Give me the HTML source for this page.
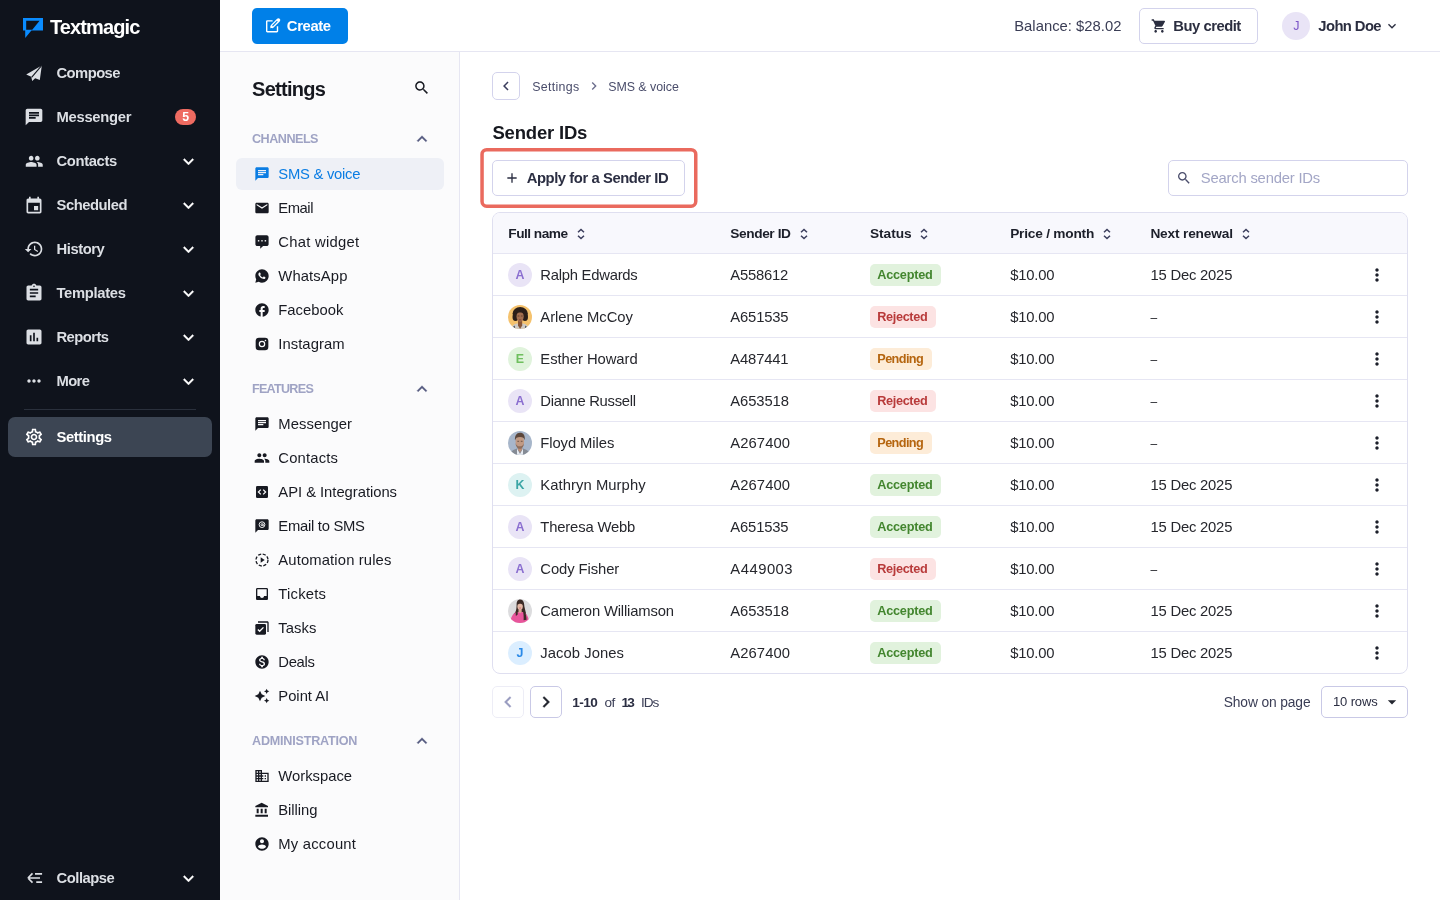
<!DOCTYPE html>
<html lang="en"><head><meta charset="utf-8"><title>Sender IDs - Textmagic</title><style>
html,body{margin:0;padding:0}
body{width:1440px;height:900px;overflow:hidden;position:relative;background:#fff;font-family:"Liberation Sans", sans-serif;-webkit-font-smoothing:antialiased;will-change:transform}
.a{position:absolute;box-sizing:border-box}
.t{position:absolute;white-space:pre;line-height:20px;height:20px}
</style></head><body>
<div class="a" style="left:0px;top:0px;width:220px;height:900px;background:#0f131c"></div>
<div class="a" style="left:220px;top:0px;width:1220px;height:51px;background:#fff"></div>
<div class="a" style="left:220px;top:51px;width:1220px;height:1px;background:#e6e6f2"></div>
<div class="a" style="left:220px;top:52px;width:239px;height:848px;background:#fbfbfc"></div>
<div class="a" style="left:459px;top:52px;width:1px;height:848px;background:#e6e6f2"></div>
<svg class="a" style="left:20px;top:14px" width="28" height="28" viewBox="20 14 28 28"><path fill="#0a8cff" d="M23 18H43V30.6H31.4L25.2 38V30.6H23Z"/><path fill="#0f131c" d="M26.2 20.7H39.6L32.3 29.7H26.2Z"/></svg>
<svg class="a" style="left:24.00px;top:63.00px" width="20" height="20" viewBox="2 0 20 20" ><path fill="#dcdfe4" d="M19.8 2.4 L4.2 11.6 L9.2 13.8 L10.2 18 L13.2 15.3 L17.8 17 Z"/><path d="M19.8 2.4 L9.6 14.4" stroke="#0f131c" stroke-width="1.1" fill="none"/></svg>
<svg class="a" style="left:24.00px;top:107.00px" width="20" height="20" viewBox="0 0 24 24" fill="#dcdfe4" ><path d="M20 2H4c-1.1 0-1.99.9-1.99 2L2 22l4-4h14c1.1 0 2-.9 2-2V4c0-1.1-.9-2-2-2zM6 9h12v2H6V9zm8 5H6v-2h8v2zm4-6H6V6h12v2z"/></svg>
<div class="a" style="left:175px;top:109px;width:21px;height:16px;background:#ee6b61;border-radius:8px"></div>
<svg class="a" style="left:24.75px;top:151.75px" width="18.5" height="18.5" viewBox="0 0 24 24" fill="#dcdfe4" ><path d="M16 11c1.66 0 2.99-1.34 2.99-3S17.66 5 16 5c-1.66 0-3 1.34-3 3s1.34 3 3 3zm-8 0c1.66 0 2.99-1.34 2.99-3S9.66 5 8 5C6.34 5 5 6.34 5 8s1.34 3 3 3zm0 2c-2.33 0-7 1.17-7 3.5V19h14v-2.5c0-2.33-4.67-3.5-7-3.5zm8 0c-.29 0-.62.02-.97.05 1.16.84 1.97 1.97 1.97 3.45V19h6v-2.5c0-2.33-4.67-3.5-7-3.5z"/></svg>
<svg class="a" style="left:177.50px;top:150.80px" width="21" height="21" viewBox="0 0 24 24" fill="#ffffff" stroke="#ffffff" stroke-width="0.35"><path d="M16.59 8.59L12 13.17 7.41 8.59 6 10l6 6 6-6z"/></svg>
<svg class="a" style="left:24.00px;top:196.00px" width="20" height="20" viewBox="0 0 24 24" fill="#dcdfe4" ><path d="M17 12h-5v5h5v-5zM16 1v2H8V1H6v2H5c-1.11 0-1.99.9-1.99 2L3 19c0 1.1.89 2 2 2h14c1.1 0 2-.9 2-2V5c0-1.1-.9-2-2-2h-1V1h-2zm3 18H5V8h14v11z"/></svg>
<svg class="a" style="left:177.50px;top:194.80px" width="21" height="21" viewBox="0 0 24 24" fill="#ffffff" stroke="#ffffff" stroke-width="0.35"><path d="M16.59 8.59L12 13.17 7.41 8.59 6 10l6 6 6-6z"/></svg>
<svg class="a" style="left:24.00px;top:239.00px" width="20" height="20" viewBox="0 0 24 24" fill="#dcdfe4" ><path d="M13 3c-4.97 0-9 4.03-9 9H1l3.89 3.89.07.14L9 12H6c0-3.87 3.13-7 7-7s7 3.13 7 7-3.13 7-7 7c-1.93 0-3.68-.79-4.94-2.06l-1.42 1.42C8.27 19.99 10.51 21 13 21c4.97 0 9-4.03 9-9s-4.03-9-9-9zm-1 5v5l4.28 2.54.72-1.21-3.5-2.08V8H12z"/></svg>
<svg class="a" style="left:177.50px;top:238.80px" width="21" height="21" viewBox="0 0 24 24" fill="#ffffff" stroke="#ffffff" stroke-width="0.35"><path d="M16.59 8.59L12 13.17 7.41 8.59 6 10l6 6 6-6z"/></svg>
<svg class="a" style="left:24.00px;top:283.00px" width="20" height="20" viewBox="0 0 24 24" fill="#dcdfe4" ><path d="M19 3h-4.18C14.4 1.84 13.3 1 12 1c-1.3 0-2.4.84-2.82 2H5c-1.1 0-2 .9-2 2v14c0 1.1.9 2 2 2h14c1.1 0 2-.9 2-2V5c0-1.1-.9-2-2-2zm-7 0c.55 0 1 .45 1 1s-.45 1-1 1-1-.45-1-1 .45-1 1-1zm2 14H7v-2h7v2zm3-4H7v-2h10v2zm0-4H7V7h10v2z"/></svg>
<svg class="a" style="left:177.50px;top:282.80px" width="21" height="21" viewBox="0 0 24 24" fill="#ffffff" stroke="#ffffff" stroke-width="0.35"><path d="M16.59 8.59L12 13.17 7.41 8.59 6 10l6 6 6-6z"/></svg>
<svg class="a" style="left:24.00px;top:327.00px" width="20" height="20" viewBox="0 0 24 24" fill="#dcdfe4" ><path d="M19 3H5c-1.1 0-2 .9-2 2v14c0 1.1.9 2 2 2h14c1.1 0 2-.9 2-2V5c0-1.1-.9-2-2-2zM9 17H7v-7h2v7zm4 0h-2V7h2v10zm4 0h-2v-4h2v4z"/></svg>
<svg class="a" style="left:177.50px;top:326.80px" width="21" height="21" viewBox="0 0 24 24" fill="#ffffff" stroke="#ffffff" stroke-width="0.35"><path d="M16.59 8.59L12 13.17 7.41 8.59 6 10l6 6 6-6z"/></svg>
<svg class="a" style="left:24.00px;top:371.00px" width="20" height="20" viewBox="0 0 24 24" fill="#dcdfe4" ><path d="M6 10c-1.1 0-2 .9-2 2s.9 2 2 2 2-.9 2-2-.9-2-2-2zm12 0c-1.1 0-2 .9-2 2s.9 2 2 2 2-.9 2-2-.9-2-2-2zm-6 0c-1.1 0-2 .9-2 2s.9 2 2 2 2-.9 2-2-.9-2-2-2z"/></svg>
<svg class="a" style="left:177.50px;top:370.80px" width="21" height="21" viewBox="0 0 24 24" fill="#ffffff" stroke="#ffffff" stroke-width="0.35"><path d="M16.59 8.59L12 13.17 7.41 8.59 6 10l6 6 6-6z"/></svg>
<div class="a" style="left:24px;top:409px;width:172px;height:1px;background:#2a303c"></div>
<div class="a" style="left:8px;top:417px;width:204px;height:40px;background:#3c4553;border-radius:7px"></div>
<svg class="a" style="left:24.00px;top:427.00px" width="20" height="20" viewBox="0 0 24 24" fill="#ffffff" ><path d="M19.43 12.98c.04-.32.07-.64.07-.98 0-.34-.03-.66-.07-.98l2.11-1.65c.19-.15.24-.42.12-.64l-2-3.46c-.09-.16-.26-.25-.44-.25-.06 0-.12.01-.17.03l-2.49 1c-.52-.4-1.08-.73-1.69-.98l-.38-2.65C14.46 2.18 14.25 2 14 2h-4c-.25 0-.46.18-.49.42l-.38 2.65c-.61.25-1.17.59-1.69.98l-2.49-1c-.06-.02-.12-.03-.18-.03-.17 0-.34.09-.43.25l-2 3.46c-.13.22-.07.49.12.64l2.11 1.65c-.04.32-.07.65-.07.98 0 .33.03.66.07.98l-2.11 1.65c-.19.15-.24.42-.12.64l2 3.46c.09.16.26.25.44.25.06 0 .12-.01.17-.03l2.49-1c.52.4 1.08.73 1.69.98l.38 2.65c.03.24.24.42.49.42h4c.25 0 .46-.18.49-.42l.38-2.65c.61-.25 1.17-.59 1.69-.98l2.49 1c.06.02.12.03.18.03.17 0 .34-.09.43-.25l2-3.46c.12-.22.07-.49-.12-.64l-2.11-1.65zm-1.98-1.71c.04.31.05.52.05.73 0 .21-.02.43-.05.73l-.14 1.13.89.7 1.08.84-.7 1.21-1.27-.51-1.04-.42-.9.68c-.43.32-.84.56-1.25.73l-1.06.43-.16 1.13-.2 1.35h-1.4l-.19-1.35-.16-1.13-1.06-.43c-.43-.18-.83-.41-1.23-.71l-.91-.7-1.06.43-1.27.51-.7-1.21 1.08-.84.89-.7-.14-1.13c-.03-.31-.05-.54-.05-.74s.02-.43.05-.73l.14-1.13-.89-.7-1.08-.84.7-1.21 1.27.51 1.04.42.9-.68c.43-.32.84-.56 1.25-.73l1.06-.43.16-1.13.2-1.35h1.39l.19 1.35.16 1.13 1.06.43c.43.18.83.41 1.23.71l.91.7 1.06-.43 1.27-.51.7 1.21-1.07.85-.89.7.14 1.13zM12 8c-2.21 0-4 1.79-4 4s1.79 4 4 4 4-1.79 4-4-1.79-4-4-4zm0 6c-1.1 0-2-.9-2-2s.9-2 2-2 2 .9 2 2-.9 2-2 2z"/></svg>
<svg class="a" style="left:24.80px;top:868.00px" width="20" height="20" viewBox="0 0 24 24" ><path d="M3.5 12H18M3.5 12L9 6.5M3.5 12L9 17.500M12 7H20.500M13.500 17H20.500" stroke="#dcdfe4" stroke-width="2" fill="none" stroke-linecap="butt"/></svg>
<svg class="a" style="left:177.50px;top:867.80px" width="21" height="21" viewBox="0 0 24 24" fill="#ffffff" stroke="#ffffff" stroke-width="0.35"><path d="M16.59 8.59L12 13.17 7.41 8.59 6 10l6 6 6-6z"/></svg>
<div class="a" style="left:252px;top:8px;width:96px;height:36px;background:#0080e8;border-radius:5px"></div>
<svg class="a" style="left:264px;top:16px" width="18" height="18" viewBox="264 16 18 18"><path d="M272.6 20.9H267.3a.6.6 0 0 0-.6.6V31.100a.6.6 0 0 0 .6.6H276.900a.6.6 0 0 0 .6-.6V26.200" stroke="#fff" stroke-width="1.4" fill="none"/><path d="M272.3 26.2L278.400 20.100" stroke="#fff" stroke-width="3.700" stroke-linecap="round"/><path d="M272.500 26L277.300 21.200" stroke="#0080e8" stroke-width="1.100" stroke-linecap="butt"/><path d="M270.200 28.300L270.800 25.700L272.800 27.700Z" fill="#fff"/></svg>
<div class="a" style="left:1139px;top:8px;width:119px;height:36px;border:1px solid #d3d3ec;border-radius:5px;background:#fff"></div>
<svg class="a" style="left:1150.60px;top:18.00px" width="16" height="16" viewBox="0 0 24 24" fill="#2b2e40" ><path d="M7 18c-1.1 0-1.99.9-1.99 2S5.9 22 7 22s2-.9 2-2-.9-2-2-2zM1 2v2h2l3.6 7.59-1.35 2.45c-.16.28-.25.61-.25.96 0 1.1.9 2 2 2h12v-2H7.42c-.14 0-.25-.11-.25-.25l.03-.12.9-1.63h7.45c.75 0 1.41-.41 1.75-1.03l3.58-6.49c.08-.14.12-.31.12-.48 0-.55-.45-1-1-1H5.21l-.94-2H1zm16 16c-1.1 0-1.99.9-1.99 2s.89 2 1.99 2 2-.9 2-2-.9-2-2-2z"/></svg>
<div class="a" style="left:1282px;top:12px;width:28px;height:28px;background:#e9e4f6;border-radius:50%"></div>
<svg class="a" style="left:1384.30px;top:18.20px" width="16" height="16" viewBox="0 0 24 24" fill="#2b2e40" ><path d="M16.59 8.59L12 13.17 7.41 8.59 6 10l6 6 6-6z"/></svg>
<svg class="a" style="left:412.75px;top:78.75px" width="17.5" height="17.5" viewBox="0 0 24 24" fill="#181a22" ><path d="M15.5 14h-.79l-.28-.27C15.41 12.59 16 11.11 16 9.5 16 5.91 13.09 3 9.5 3S3 5.91 3 9.5 5.91 16 9.5 16c1.61 0 3.09-.59 4.23-1.57l.27.28v.79l5 4.99L20.49 19l-4.99-5zm-6 0C7.01 14 5 11.99 5 9.5S7.01 5 9.5 5 14 7.01 14 9.5 11.99 14 9.5 14z"/></svg>
<svg class="a" style="left:412.00px;top:128.80px" width="20" height="20" viewBox="0 0 24 24" fill="#555a80" stroke="#555a80" stroke-width="0.4"><path d="M12 8l-6 6 1.41 1.41L12 10.83l4.59 4.58L18 14z"/></svg>
<svg class="a" style="left:412.00px;top:378.80px" width="20" height="20" viewBox="0 0 24 24" fill="#555a80" stroke="#555a80" stroke-width="0.4"><path d="M12 8l-6 6 1.41 1.41L12 10.83l4.59 4.58L18 14z"/></svg>
<svg class="a" style="left:412.00px;top:730.80px" width="20" height="20" viewBox="0 0 24 24" fill="#555a80" stroke="#555a80" stroke-width="0.4"><path d="M12 8l-6 6 1.41 1.41L12 10.83l4.59 4.58L18 14z"/></svg>
<div class="a" style="left:236px;top:158px;width:208px;height:32px;background:#eef0f6;border-radius:6px"></div>
<svg class="a" style="left:254.00px;top:166.00px" width="16" height="16" viewBox="0 0 24 24" fill="#0b7de3" ><path d="M20 2H4c-1.1 0-1.99.9-1.99 2L2 22l4-4h14c1.1 0 2-.9 2-2V4c0-1.1-.9-2-2-2zM6 9h12v2H6V9zm8 5H6v-2h8v2zm4-6H6V6h12v2z"/></svg>
<svg class="a" style="left:254.00px;top:200.00px" width="16" height="16" viewBox="0 0 24 24" fill="#181a22" ><path d="M20 4H4c-1.1 0-1.99.9-1.99 2L2 18c0 1.1.9 2 2 2h16c1.1 0 2-.9 2-2V6c0-1.1-.9-2-2-2zm0 4l-8 5-8-5V6l8 5 8-5v2z"/></svg>
<svg class="a" style="left:254.00px;top:234.00px" width="16" height="16" viewBox="0 0 24 24" ><path fill="#181a22" d="M5 1.800h14c1.600 0 2.900 1.300 2.900 2.900v10.500c0 1.600-1.300 2.900-2.900 2.900h-5.400L9.300 22.200V18.100H5c-1.600 0-2.900-1.300-2.900-2.900V4.700C2.100 3.100 3.400 1.800 5 1.800z"/><circle cx="6.900" cy="10.100" r="1.250" fill="#fbfbfc"/><circle cx="12" cy="10.100" r="1.250" fill="#fbfbfc"/><circle cx="17.100" cy="10.100" r="1.250" fill="#fbfbfc"/></svg>
<svg class="a" style="left:254.00px;top:268.00px" width="16" height="16" viewBox="0 0 24 24" ><path fill="#181a22" d="M12 2C6.500 2 2 6.500 2 12c0 1.800.500 3.500 1.300 5L2 22l5.200-1.300c1.400.800 3.100 1.300 4.800 1.300 5.500 0 10-4.500 10-10S17.500 2 12 2z"/><path fill="#fbfbfc" d="M9.300 7.200c-.200-.500-.400-.500-.600-.500h-.500c-.200 0-.500.100-.700.300-.200.300-.900.900-.900 2.200s.900 2.500 1.100 2.700c.100.200 1.800 2.900 4.500 3.900 2.200.900 2.700.700 3.100.600.500 0 1.500-.600 1.700-1.200.200-.600.200-1.100.200-1.200-.100-.100-.200-.200-.500-.300-.300-.100-1.500-.800-1.800-.900-.200-.100-.400-.100-.600.100-.200.300-.700.900-.800 1-.100.200-.300.200-.600.100-.300-.100-1.100-.400-2.100-1.300-.800-.700-1.300-1.500-1.500-1.800-.100-.300 0-.400.100-.600.100-.100.300-.300.400-.500.100-.100.200-.300.300-.400.100-.200 0-.400 0-.500-.100-.100-.600-1.400-.800-1.700z"/></svg>
<svg class="a" style="left:254.00px;top:302.00px" width="16" height="16" viewBox="0 0 24 24" fill="#181a22" ><path d="M12 2C6.480 2 2 6.480 2 12c0 4.840 3.440 8.870 8 9.800V15H8v-3h2V9.500C10 7.570 11.570 6 13.500 6H16v3h-2c-.550 0-1 .450-1 1v2h3v3h-3v6.950c5.050-.500 9-4.760 9-9.950 0-5.520-4.480-10-10-10z"/></svg>
<svg class="a" style="left:254.00px;top:336.00px" width="16" height="16" viewBox="0 0 24 24" ><rect x="2.500" y="2.500" width="19" height="19" rx="5" fill="#181a22"/><circle cx="12" cy="12" r="4" fill="none" stroke="#fbfbfc" stroke-width="1.800"/><circle cx="17.200" cy="6.800" r="1.200" fill="#fbfbfc"/></svg>
<svg class="a" style="left:254.00px;top:416.00px" width="16" height="16" viewBox="0 0 24 24" fill="#181a22" ><path d="M20 2H4c-1.1 0-1.99.9-1.99 2L2 22l4-4h14c1.1 0 2-.9 2-2V4c0-1.1-.9-2-2-2zM6 9h12v2H6V9zm8 5H6v-2h8v2zm4-6H6V6h12v2z"/></svg>
<svg class="a" style="left:254.00px;top:450.00px" width="16" height="16" viewBox="0 0 24 24" fill="#181a22" ><path d="M16 11c1.66 0 2.99-1.34 2.99-3S17.66 5 16 5c-1.66 0-3 1.34-3 3s1.34 3 3 3zm-8 0c1.66 0 2.99-1.34 2.99-3S9.66 5 8 5C6.34 5 5 6.34 5 8s1.34 3 3 3zm0 2c-2.33 0-7 1.17-7 3.5V19h14v-2.5c0-2.33-4.67-3.5-7-3.5zm8 0c-.29 0-.62.02-.97.05 1.16.84 1.97 1.97 1.97 3.45V19h6v-2.5c0-2.33-4.67-3.5-7-3.5z"/></svg>
<svg class="a" style="left:254.00px;top:484.00px" width="16" height="16" viewBox="0 0 24 24" ><rect x="3" y="3" width="18" height="18" rx="2" fill="#181a22"/><path d="M10.200 8.400L6.600 12l3.600 3.600M13.800 8.400L17.400 12l-3.600 3.600" stroke="#fbfbfc" stroke-width="1.900" fill="none"/></svg>
<svg class="a" style="left:254.00px;top:518.00px" width="16" height="16" viewBox="0 0 24 24" ><path fill="#181a22" d="M20 2H4c-1.100 0-2 .900-2 2v18l4-4h14c1.100 0 2-.900 2-2V4c0-1.100-.900-2-2-2z"/><circle cx="12" cy="10" r="4.300" fill="none" stroke="#fbfbfc" stroke-width="1.400"/><circle cx="12" cy="10" r="1.500" fill="none" stroke="#fbfbfc" stroke-width="1.300"/><path d="M13.700 8.300v2.500c0 .800.600 1.200 1.200 1.200" stroke="#fbfbfc" stroke-width="1.200" fill="none"/></svg>
<svg class="a" style="left:254.00px;top:552.00px" width="16" height="16" viewBox="0 0 24 24" ><circle cx="12" cy="12" r="9" fill="none" stroke="#181a22" stroke-width="2" stroke-dasharray="4.700 2.370"/><path d="M10 8l6 4-6 4z" fill="#181a22"/></svg>
<svg class="a" style="left:254.00px;top:586.00px" width="16" height="16" viewBox="0 0 24 24" fill="#181a22" ><path d="M19 3H4.99c-1.11 0-1.98.9-1.98 2L3 19c0 1.1.88 2 1.99 2H19c1.1 0 2-.9 2-2V5c0-1.1-.9-2-2-2zm0 12h-4c0 1.66-1.35 3-3 3s-3-1.34-3-3H4.990V5H19v10z"/></svg>
<svg class="a" style="left:254.00px;top:620.00px" width="16" height="16" viewBox="0 0 24 24" ><path fill="#181a22" d="M6 2h14c1.100 0 2 .900 2 2v14h-2V4H6z"/><rect x="2" y="6" width="16" height="16" rx="2" fill="#181a22"/><path d="M5.800 14.200l2.700 2.700 5.700-5.800" stroke="#fbfbfc" stroke-width="2" fill="none"/></svg>
<svg class="a" style="left:254.00px;top:654.00px" width="16" height="16" viewBox="0 0 24 24" fill="#181a22" ><path d="M12 2C6.48 2 2 6.48 2 12s4.48 10 10 10 10-4.48 10-10S17.52 2 12 2zm1.41 16.09V20h-2.67v-1.93c-1.71-.36-3.16-1.46-3.27-3.4h1.96c.1 1.05.82 1.87 2.65 1.87 1.96 0 2.4-.98 2.4-1.59 0-.83-.44-1.61-2.67-2.14-2.48-.6-4.18-1.62-4.18-3.67 0-1.72 1.39-2.84 3.11-3.21V4h2.67v1.95c1.86.45 2.79 1.86 2.85 3.39H14.3c-.05-1.11-.64-1.87-2.22-1.87-1.5 0-2.4.68-2.4 1.64 0 .84.65 1.39 2.67 1.91s4.18 1.39 4.18 3.91c-.01 1.83-1.38 2.83-3.12 3.16z"/></svg>
<svg class="a" style="left:254.00px;top:688.00px" width="16" height="16" viewBox="0 0 24 24" fill="#181a22" ><path d="M19 9l1.25-2.75L23 5l-2.75-1.25L19 1l-1.25 2.75L15 5l2.75 1.25L19 9zm-7.5.5L9 4 6.5 9.5 1 12l5.500 2.500L9 20l2.500-5.500L17 12l-5.500-2.500zM19 15l-1.250 2.750L15 19l2.750 1.250L19 23l1.250-2.750L23 19l-2.750-1.250L19 15z"/></svg>
<svg class="a" style="left:254.00px;top:768.00px" width="16" height="16" viewBox="0 0 24 24" fill="#181a22" ><path d="M12 7V3H2v18h20V7H12zM6 19H4v-2h2v2zm0-4H4v-2h2v2zm0-4H4V9h2v2zm0-4H4V5h2v2zm4 12H8v-2h2v2zm0-4H8v-2h2v2zm0-4H8V9h2v2zm0-4H8V5h2v2zm10 12h-8v-2h2v-2h-2v-2h2v-2h-2V9h8v10zm-2-8h-2v2h2v-2zm0 4h-2v2h2v-2z"/></svg>
<svg class="a" style="left:254.00px;top:802.00px" width="16" height="16" viewBox="0 0 24 24" fill="#181a22" ><path d="M4 10v7h3v-7H4zm6 0v7h3v-7h-3zM2 22h19v-3H2v3zm14-12v7h3v-7h-3zm-4.5-9L2 6v2h19V6l-9.5-5z"/></svg>
<svg class="a" style="left:254.00px;top:836.00px" width="16" height="16" viewBox="0 0 24 24" fill="#181a22" ><path d="M12 2C6.48 2 2 6.48 2 12s4.48 10 10 10 10-4.48 10-10S17.52 2 12 2zm0 3c1.66 0 3 1.34 3 3s-1.34 3-3 3-3-1.34-3-3 1.34-3 3-3zm0 14.2c-2.5 0-4.71-1.28-6-3.22.03-1.99 4-3.08 6-3.08 1.99 0 5.97 1.09 6 3.08-1.29 1.94-3.5 3.22-6 3.22z"/></svg>
<div class="a" style="left:492px;top:72px;width:28px;height:28px;border:1px solid #d3d3ec;border-radius:5px;background:#fff"></div>
<svg class="a" style="left:497.10px;top:77.00px" width="18" height="18" viewBox="0 0 24 24" fill="#3a3d5c" ><path d="M15.41 7.41L14 6l-6 6 6 6 1.41-1.41L10.83 12z"/></svg>
<svg class="a" style="left:585.80px;top:78.30px" width="16" height="16" viewBox="0 0 24 24" fill="#6a6d8c" ><path d="M10 6L8.59 7.41 13.17 12l-4.58 4.59L10 18l6-6z"/></svg>
<svg class="a" style="left:478px;top:146px" width="222" height="64" viewBox="478 146 222 64"><rect x="482.05" y="149.65" width="213.7" height="56.5" rx="4.6" fill="none" stroke="#ea6a5e" stroke-width="3.5"/></svg>
<div class="a" style="left:492px;top:160px;width:193px;height:36px;border:1px solid #d3d3ec;border-radius:5px;background:#fff"></div>
<svg class="a" style="left:504.00px;top:170.30px" width="16" height="16" viewBox="0 0 24 24" fill="#2b2e42" ><path d="M19 13h-6v6h-2v-6H5v-2h6V5h2v6h6v2z"/></svg>
<div class="a" style="left:1168px;top:160px;width:240px;height:36px;border:1px solid #d3d3ec;border-radius:5px;background:#fff"></div>
<svg class="a" style="left:1175.70px;top:170.30px" width="16" height="16" viewBox="0 0 24 24" fill="#4a4d6b" ><path d="M15.5 14h-.79l-.28-.27C15.41 12.59 16 11.11 16 9.5 16 5.91 13.09 3 9.5 3S3 5.91 3 9.5 5.91 16 9.5 16c1.61 0 3.09-.59 4.23-1.57l.27.28v.79l5 4.99L20.49 19l-4.99-5zm-6 0C7.01 14 5 11.99 5 9.5S7.01 5 9.5 5 14 7.01 14 9.5 11.99 14 9.5 14z"/></svg>
<div class="a" style="left:492px;top:212px;width:916px;height:462px;border:1px solid #dfdff0;border-radius:8px;background:#fff;overflow:hidden"></div>
<div class="a" style="left:493px;top:213px;width:914px;height:40px;background:#f8f8fd;border-radius:7px 7px 0 0"></div>
<div class="a" style="left:493px;top:253px;width:914px;height:1px;background:#e6e6f3"></div>
<div class="a" style="left:493px;top:295px;width:914px;height:1px;background:#e6e6f3"></div>
<div class="a" style="left:493px;top:337px;width:914px;height:1px;background:#e6e6f3"></div>
<div class="a" style="left:493px;top:379px;width:914px;height:1px;background:#e6e6f3"></div>
<div class="a" style="left:493px;top:421px;width:914px;height:1px;background:#e6e6f3"></div>
<div class="a" style="left:493px;top:463px;width:914px;height:1px;background:#e6e6f3"></div>
<div class="a" style="left:493px;top:505px;width:914px;height:1px;background:#e6e6f3"></div>
<div class="a" style="left:493px;top:547px;width:914px;height:1px;background:#e6e6f3"></div>
<div class="a" style="left:493px;top:589px;width:914px;height:1px;background:#e6e6f3"></div>
<div class="a" style="left:493px;top:631px;width:914px;height:1px;background:#e6e6f3"></div>
<svg class="a" style="left:575px;top:226.1px" width="12" height="16" viewBox="-6 -8 12 16"><path d="M-3 -1.700L0 -4.500L3 -1.700M-3 1.700L0 4.500L3 1.700" stroke="#3a3d5c" stroke-width="1.500" fill="none" stroke-linejoin="miter"/></svg>
<svg class="a" style="left:798px;top:226.1px" width="12" height="16" viewBox="-6 -8 12 16"><path d="M-3 -1.700L0 -4.500L3 -1.700M-3 1.700L0 4.500L3 1.700" stroke="#3a3d5c" stroke-width="1.500" fill="none" stroke-linejoin="miter"/></svg>
<svg class="a" style="left:918px;top:226.1px" width="12" height="16" viewBox="-6 -8 12 16"><path d="M-3 -1.700L0 -4.500L3 -1.700M-3 1.700L0 4.500L3 1.700" stroke="#3a3d5c" stroke-width="1.500" fill="none" stroke-linejoin="miter"/></svg>
<svg class="a" style="left:1100.9px;top:226.1px" width="12" height="16" viewBox="-6 -8 12 16"><path d="M-3 -1.700L0 -4.500L3 -1.700M-3 1.700L0 4.500L3 1.700" stroke="#3a3d5c" stroke-width="1.500" fill="none" stroke-linejoin="miter"/></svg>
<svg class="a" style="left:1240px;top:226.1px" width="12" height="16" viewBox="-6 -8 12 16"><path d="M-3 -1.700L0 -4.500L3 -1.700M-3 1.700L0 4.500L3 1.700" stroke="#3a3d5c" stroke-width="1.500" fill="none" stroke-linejoin="miter"/></svg>
<div class="a" style="left:508px;top:263px;width:24px;height:24px;background:#e9e4f6;border-radius:50%"></div>
<div class="a" style="left:870px;top:264px;width:70.7px;height:22px;background:#e1f2dd;border-radius:5px"></div>
<svg class="a" style="left:1367.40px;top:264.50px" width="20" height="20" viewBox="0 0 24 24" fill="#1c1f2a" ><path d="M12 8c1.1 0 2-.9 2-2s-.9-2-2-2-2 .9-2 2 .9 2 2 2zm0 2c-1.1 0-2 .9-2 2s.9 2 2 2 2-.9 2-2-.9-2-2-2zm0 6c-1.1 0-2 .9-2 2s.9 2 2 2 2-.9 2-2-.9-2-2-2z"/></svg>
<svg class="a" style="left:508px;top:305px" width="24" height="24" viewBox="0 0 24 24"><defs><clipPath id="cc_arlene"><circle cx="12" cy="12" r="12"/></clipPath></defs><circle cx="12" cy="12" r="12" fill="#f5c26d"/><g clip-path="url(#cc_arlene)">
<ellipse cx="12.2" cy="8.6" rx="7.600" ry="6.600" fill="#2b1e18"/><ellipse cx="7.500" cy="12" rx="3" ry="4" fill="#2b1e18"/><ellipse cx="17" cy="12" rx="3" ry="4" fill="#2b1e18"/>
<path d="M3 24c.500-3.500 3.500-5 6-5.500h6c2.500.500 5.500 2 6 5.500z" fill="#cfcac4"/><path d="M4 23l2.500-2.500 1 3.500zM20 23l-2.500-2.500-1 3.500z" fill="#3d4450"/>
<path d="M10 15h4.200v5.500l-2.100 3.500-2.100-3.500z" fill="#8a5636"/>
<ellipse cx="12.100" cy="11.500" rx="3.600" ry="5.200" fill="#a46f4f"/><path d="M8.500 9c.500-2.200 2-3.200 3.600-3.200s3.100 1 3.600 3.200c-1.200-1.200-2.300-1.600-3.600-1.600s-2.400.400-3.600 1.600z" fill="#2b1e18"/>
<path d="M9.600 11h1.800M12.900 11h1.800" stroke="#4a2f22" stroke-width=".700"/><path d="M11 14.800h2.200" stroke="#7a3f35" stroke-width=".800"/></g></svg>
<div class="a" style="left:870px;top:306px;width:65.7px;height:22px;background:#fce3e3;border-radius:5px"></div>
<svg class="a" style="left:1367.40px;top:306.50px" width="20" height="20" viewBox="0 0 24 24" fill="#1c1f2a" ><path d="M12 8c1.1 0 2-.9 2-2s-.9-2-2-2-2 .9-2 2 .9 2 2 2zm0 2c-1.1 0-2 .9-2 2s.9 2 2 2 2-.9 2-2-.9-2-2-2zm0 6c-1.1 0-2 .9-2 2s.9 2 2 2 2-.9 2-2-.9-2-2-2z"/></svg>
<div class="a" style="left:508px;top:347px;width:24px;height:24px;background:#e0f3dc;border-radius:50%"></div>
<div class="a" style="left:870px;top:348px;width:61.7px;height:22px;background:#fdecd8;border-radius:5px"></div>
<svg class="a" style="left:1367.40px;top:348.50px" width="20" height="20" viewBox="0 0 24 24" fill="#1c1f2a" ><path d="M12 8c1.1 0 2-.9 2-2s-.9-2-2-2-2 .9-2 2 .9 2 2 2zm0 2c-1.1 0-2 .9-2 2s.9 2 2 2 2-.9 2-2-.9-2-2-2zm0 6c-1.1 0-2 .9-2 2s.9 2 2 2 2-.9 2-2-.9-2-2-2z"/></svg>
<div class="a" style="left:508px;top:389px;width:24px;height:24px;background:#e9e4f6;border-radius:50%"></div>
<div class="a" style="left:870px;top:390px;width:65.7px;height:22px;background:#fce3e3;border-radius:5px"></div>
<svg class="a" style="left:1367.40px;top:390.50px" width="20" height="20" viewBox="0 0 24 24" fill="#1c1f2a" ><path d="M12 8c1.1 0 2-.9 2-2s-.9-2-2-2-2 .9-2 2 .9 2 2 2zm0 2c-1.1 0-2 .9-2 2s.9 2 2 2 2-.9 2-2-.9-2-2-2zm0 6c-1.1 0-2 .9-2 2s.9 2 2 2 2-.9 2-2-.9-2-2-2z"/></svg>
<svg class="a" style="left:508px;top:431px" width="24" height="24" viewBox="0 0 24 24"><defs><clipPath id="cc_floyd"><circle cx="12" cy="12" r="12"/></clipPath></defs><circle cx="12" cy="12" r="12" fill="#a7b6ca"/><g clip-path="url(#cc_floyd)">
<path d="M2 24c.500-3.800 3.500-5.500 7-6.500h6c3.500 1 6.500 2.700 7 6.500z" fill="#858b95"/><path d="M9 17.500l3 5.500 3-5.500v6.500H9z" fill="#e6ebf2"/>
<path d="M10 15h4v3.500l-2 3-2-3z" fill="#b98e78"/>
<ellipse cx="11.800" cy="10.800" rx="4.300" ry="6" fill="#c19a83"/>
<path d="M7.500 12c.300 3.500 2 5.800 4.300 5.800s4-2.300 4.300-5.800c-.600 2.500-2.300 3.300-4.300 3.300s-3.700-.800-4.300-3.300z" fill="#8d6e5c"/>
<path d="M7 9.500c-.500-4.500 1.500-7.800 5-7.800s5.300 2.500 4.700 7.600c-.700-2.300-1.700-3.300-4.700-3.300s-4.300 1-5 3.500z" fill="#5b463a"/>
<path d="M9.300 10.300h1.800M12.800 10.300h1.800" stroke="#4a3a33" stroke-width=".700"/></g></svg>
<div class="a" style="left:870px;top:432px;width:61.7px;height:22px;background:#fdecd8;border-radius:5px"></div>
<svg class="a" style="left:1367.40px;top:432.50px" width="20" height="20" viewBox="0 0 24 24" fill="#1c1f2a" ><path d="M12 8c1.1 0 2-.9 2-2s-.9-2-2-2-2 .9-2 2 .9 2 2 2zm0 2c-1.1 0-2 .9-2 2s.9 2 2 2 2-.9 2-2-.9-2-2-2zm0 6c-1.1 0-2 .9-2 2s.9 2 2 2 2-.9 2-2-.9-2-2-2z"/></svg>
<div class="a" style="left:508px;top:473px;width:24px;height:24px;background:#ddf2f2;border-radius:50%"></div>
<div class="a" style="left:870px;top:474px;width:70.7px;height:22px;background:#e1f2dd;border-radius:5px"></div>
<svg class="a" style="left:1367.40px;top:474.50px" width="20" height="20" viewBox="0 0 24 24" fill="#1c1f2a" ><path d="M12 8c1.1 0 2-.9 2-2s-.9-2-2-2-2 .9-2 2 .9 2 2 2zm0 2c-1.1 0-2 .9-2 2s.9 2 2 2 2-.9 2-2-.9-2-2-2zm0 6c-1.1 0-2 .9-2 2s.9 2 2 2 2-.9 2-2-.9-2-2-2z"/></svg>
<div class="a" style="left:508px;top:515px;width:24px;height:24px;background:#e9e4f6;border-radius:50%"></div>
<div class="a" style="left:870px;top:516px;width:70.7px;height:22px;background:#e1f2dd;border-radius:5px"></div>
<svg class="a" style="left:1367.40px;top:516.50px" width="20" height="20" viewBox="0 0 24 24" fill="#1c1f2a" ><path d="M12 8c1.1 0 2-.9 2-2s-.9-2-2-2-2 .9-2 2 .9 2 2 2zm0 2c-1.1 0-2 .9-2 2s.9 2 2 2 2-.9 2-2-.9-2-2-2zm0 6c-1.1 0-2 .9-2 2s.9 2 2 2 2-.9 2-2-.9-2-2-2z"/></svg>
<div class="a" style="left:508px;top:557px;width:24px;height:24px;background:#e9e4f6;border-radius:50%"></div>
<div class="a" style="left:870px;top:558px;width:65.7px;height:22px;background:#fce3e3;border-radius:5px"></div>
<svg class="a" style="left:1367.40px;top:558.50px" width="20" height="20" viewBox="0 0 24 24" fill="#1c1f2a" ><path d="M12 8c1.1 0 2-.9 2-2s-.9-2-2-2-2 .9-2 2 .9 2 2 2zm0 2c-1.1 0-2 .9-2 2s.9 2 2 2 2-.9 2-2-.9-2-2-2zm0 6c-1.1 0-2 .9-2 2s.9 2 2 2 2-.9 2-2-.9-2-2-2z"/></svg>
<svg class="a" style="left:508px;top:599px" width="24" height="24" viewBox="0 0 24 24"><defs><clipPath id="cc_cameron"><circle cx="12" cy="12" r="12"/></clipPath></defs><circle cx="12" cy="12" r="12" fill="#dcdcde"/><g clip-path="url(#cc_cameron)">
<path d="M12.300.500C9.500.500 8.600 2.800 8.600 5.500c0 3-.300 5.500-1.200 7.500-.800 1-1.500 1.500-1.800 2.500L8.500 17l8.500 4.800 1.900-.800C18.600 16 17.400 12 16.500 8c-.300-1.500 0-7.500-4.200-7.500z" fill="#3b2a26"/>
<path d="M2.200 24c.300-5 2.300-9.500 6.300-11h7c3.500 1.500 5.500 6 5.500 11z" fill="#e8559b"/>
<path d="M10.500 10.500h3.200v2.700l-1.600 1-1.600-1z" fill="#d8a794"/>
<ellipse cx="12.100" cy="7.300" rx="2.700" ry="3.800" fill="#e4b9a6"/>
<path d="M9.300 6.200c.300-2.500 1.300-3.600 2.800-3.600s2.500 1.100 2.800 3.600c-1-.900-1.800-1.400-2.800-1.400s-1.800.500-2.800 1.400z" fill="#3b2a26"/>
<path d="M14.600 11c.900 3 1.300 6.500 1 10.200l3-.400c-.300-3.700-1-7.200-2.300-10.300zM9.700 10.800l-1.700 1.700c-.400 1.500-.400 3.200-.100 4.500l1.800-1.500z" fill="#3b2a26"/>
<path d="M11.300 9h1.700" stroke="#d0506a" stroke-width=".800"/></g></svg>
<div class="a" style="left:870px;top:600px;width:70.7px;height:22px;background:#e1f2dd;border-radius:5px"></div>
<svg class="a" style="left:1367.40px;top:600.50px" width="20" height="20" viewBox="0 0 24 24" fill="#1c1f2a" ><path d="M12 8c1.1 0 2-.9 2-2s-.9-2-2-2-2 .9-2 2 .9 2 2 2zm0 2c-1.1 0-2 .9-2 2s.9 2 2 2 2-.9 2-2-.9-2-2-2zm0 6c-1.1 0-2 .9-2 2s.9 2 2 2 2-.9 2-2-.9-2-2-2z"/></svg>
<div class="a" style="left:508px;top:641px;width:24px;height:24px;background:#dbeeff;border-radius:50%"></div>
<div class="a" style="left:870px;top:642px;width:70.7px;height:22px;background:#e1f2dd;border-radius:5px"></div>
<svg class="a" style="left:1367.40px;top:642.50px" width="20" height="20" viewBox="0 0 24 24" fill="#1c1f2a" ><path d="M12 8c1.1 0 2-.9 2-2s-.9-2-2-2-2 .9-2 2 .9 2 2 2zm0 2c-1.1 0-2 .9-2 2s.9 2 2 2 2-.9 2-2-.9-2-2-2zm0 6c-1.1 0-2 .9-2 2s.9 2 2 2 2-.9 2-2-.9-2-2-2z"/></svg>
<div class="a" style="left:492px;top:686px;width:32px;height:32px;border:1px solid #ededf6;border-radius:5px;background:#fff"></div>
<svg class="a" style="left:496.90px;top:691.30px" width="22" height="22" viewBox="0 0 24 24" fill="#9a9dc0" stroke="#9a9dc0" stroke-width="0.3"><path d="M15.41 7.41L14 6l-6 6 6 6 1.41-1.41L10.83 12z"/></svg>
<div class="a" style="left:530px;top:686px;width:32px;height:32px;border:1px solid #c9c9e6;border-radius:5px;background:#fff"></div>
<svg class="a" style="left:534.90px;top:691.30px" width="22" height="22" viewBox="0 0 24 24" fill="#23262f" stroke="#23262f" stroke-width="0.4"><path d="M10 6L8.59 7.41 13.17 12l-4.58 4.59L10 18l6-6z"/></svg>
<div class="a" style="left:1321px;top:686px;width:87px;height:32px;border:1px solid #c9c9e6;border-radius:5px;background:#fff"></div>
<svg class="a" style="left:1382.00px;top:692.30px" width="20" height="20" viewBox="0 0 24 24" fill="#23262f" ><path d="M7 10l5 5 5-5z"/></svg>
<span class="t" style="left:50.00px;top:17.00px;font-size:20px;font-weight:700;color:#ffffff;letter-spacing:-0.882px;">Textmagic</span>
<span class="t" style="left:56.50px;top:63.00px;font-size:14.8px;font-weight:700;color:#dcdfe4;letter-spacing:-0.570px;">Compose</span>
<span class="t" style="left:56.50px;top:107.00px;font-size:14.8px;font-weight:700;color:#dcdfe4;letter-spacing:-0.289px;">Messenger</span>
<span class="t" style="left:175.00px;top:106.90px;font-size:12.3px;font-weight:700;color:#ffffff;width:21.4px;text-align:center;">5</span>
<span class="t" style="left:56.50px;top:151.00px;font-size:14.8px;font-weight:700;color:#dcdfe4;letter-spacing:-0.359px;">Contacts</span>
<span class="t" style="left:56.50px;top:195.00px;font-size:14.8px;font-weight:700;color:#dcdfe4;letter-spacing:-0.479px;">Scheduled</span>
<span class="t" style="left:56.50px;top:239.00px;font-size:14.8px;font-weight:700;color:#dcdfe4;letter-spacing:-0.447px;">History</span>
<span class="t" style="left:56.50px;top:283.00px;font-size:14.8px;font-weight:700;color:#dcdfe4;letter-spacing:-0.324px;">Templates</span>
<span class="t" style="left:56.50px;top:327.00px;font-size:14.8px;font-weight:700;color:#dcdfe4;letter-spacing:-0.570px;">Reports</span>
<span class="t" style="left:56.50px;top:371.00px;font-size:14.8px;font-weight:700;color:#dcdfe4;letter-spacing:-0.620px;">More</span>
<span class="t" style="left:56.50px;top:427.00px;font-size:14.8px;font-weight:700;color:#ffffff;letter-spacing:-0.411px;">Settings</span>
<span class="t" style="left:56.50px;top:868.00px;font-size:14.8px;font-weight:700;color:#dcdfe4;letter-spacing:-0.484px;">Collapse</span>
<span class="t" style="left:286.80px;top:16.00px;font-size:14.8px;font-weight:700;color:#ffffff;letter-spacing:-0.353px;">Create</span>
<span class="t" style="left:1014.20px;top:16.00px;font-size:14.8px;font-weight:400;color:#3a3d55;letter-spacing:0.025px;">Balance: $28.02</span>
<span class="t" style="left:1173.30px;top:16.00px;font-size:14.8px;font-weight:700;color:#2b2e40;letter-spacing:-0.484px;">Buy credit</span>
<span class="t" style="left:1293.20px;top:16.00px;font-size:12.5px;font-weight:400;color:#7b55c7;">J</span>
<span class="t" style="left:1318.30px;top:16.00px;font-size:14.8px;font-weight:700;color:#2b2e40;letter-spacing:-0.589px;">John Doe</span>
<span class="t" style="left:252.00px;top:79.00px;font-size:20px;font-weight:700;color:#16181f;letter-spacing:-0.701px;">Settings</span>
<span class="t" style="left:252.00px;top:128.50px;font-size:12.6px;font-weight:700;color:#9fa3c4;letter-spacing:-0.496px;">CHANNELS</span>
<span class="t" style="left:252.00px;top:378.50px;font-size:12.6px;font-weight:700;color:#9fa3c4;letter-spacing:-0.734px;">FEATURES</span>
<span class="t" style="left:252.00px;top:730.50px;font-size:12.6px;font-weight:700;color:#9fa3c4;letter-spacing:-0.216px;">ADMINISTRATION</span>
<span class="t" style="left:278.30px;top:164.00px;font-size:14.8px;font-weight:400;color:#0b7de3;letter-spacing:-0.250px;">SMS &amp; voice</span>
<span class="t" style="left:278.30px;top:198.00px;font-size:14.8px;font-weight:400;color:#181a22;letter-spacing:-0.450px;">Email</span>
<span class="t" style="left:278.30px;top:232.00px;font-size:14.8px;font-weight:400;color:#181a22;letter-spacing:0.256px;">Chat widget</span>
<span class="t" style="left:278.30px;top:266.00px;font-size:14.8px;font-weight:400;color:#181a22;letter-spacing:0.119px;">WhatsApp</span>
<span class="t" style="left:278.30px;top:300.00px;font-size:14.8px;font-weight:400;color:#181a22;letter-spacing:0.017px;">Facebook</span>
<span class="t" style="left:278.30px;top:334.00px;font-size:14.8px;font-weight:400;color:#181a22;letter-spacing:0.050px;">Instagram</span>
<span class="t" style="left:278.30px;top:414.00px;font-size:14.8px;font-weight:400;color:#181a22;letter-spacing:0.062px;">Messenger</span>
<span class="t" style="left:278.30px;top:448.00px;font-size:14.8px;font-weight:400;color:#181a22;letter-spacing:0.185px;">Contacts</span>
<span class="t" style="left:278.30px;top:482.00px;font-size:14.8px;font-weight:400;color:#181a22;letter-spacing:-0.033px;">API &amp; Integrations</span>
<span class="t" style="left:278.30px;top:516.00px;font-size:14.8px;font-weight:400;color:#181a22;letter-spacing:-0.267px;">Email to SMS</span>
<span class="t" style="left:278.30px;top:550.00px;font-size:14.8px;font-weight:400;color:#181a22;letter-spacing:0.137px;">Automation rules</span>
<span class="t" style="left:278.30px;top:584.00px;font-size:14.8px;font-weight:400;color:#181a22;letter-spacing:0.231px;">Tickets</span>
<span class="t" style="left:278.30px;top:618.00px;font-size:14.8px;font-weight:400;color:#181a22;letter-spacing:0.068px;">Tasks</span>
<span class="t" style="left:278.30px;top:652.00px;font-size:14.8px;font-weight:400;color:#181a22;letter-spacing:-0.336px;">Deals</span>
<span class="t" style="left:278.30px;top:686.00px;font-size:14.8px;font-weight:400;color:#181a22;letter-spacing:-0.017px;">Point AI</span>
<span class="t" style="left:278.30px;top:766.00px;font-size:14.8px;font-weight:400;color:#181a22;letter-spacing:0.006px;">Workspace</span>
<span class="t" style="left:278.30px;top:800.00px;font-size:14.8px;font-weight:400;color:#181a22;letter-spacing:-0.047px;">Billing</span>
<span class="t" style="left:278.30px;top:834.00px;font-size:14.8px;font-weight:400;color:#181a22;letter-spacing:0.214px;">My account</span>
<span class="t" style="left:532.30px;top:76.60px;font-size:12.4px;font-weight:400;color:#4a4d6b;letter-spacing:0.303px;">Settings</span>
<span class="t" style="left:608.20px;top:76.60px;font-size:12.4px;font-weight:400;color:#4a4d6b;letter-spacing:-0.034px;">SMS &amp; voice</span>
<span class="t" style="left:492.40px;top:122.70px;font-size:18.5px;font-weight:700;color:#16181f;letter-spacing:-0.184px;">Sender IDs</span>
<span class="t" style="left:526.70px;top:168.00px;font-size:14.8px;font-weight:700;color:#2b2e42;letter-spacing:-0.423px;">Apply for a Sender ID</span>
<span class="t" style="left:1200.80px;top:168.00px;font-size:14.8px;font-weight:400;color:#a3a6c6;letter-spacing:-0.197px;">Search sender IDs</span>
<span class="t" style="left:508.30px;top:223.50px;font-size:13.7px;font-weight:700;color:#1c1f2a;letter-spacing:-0.524px;">Full name</span>
<span class="t" style="left:730.30px;top:223.50px;font-size:13.7px;font-weight:700;color:#1c1f2a;letter-spacing:-0.401px;">Sender ID</span>
<span class="t" style="left:870.00px;top:223.50px;font-size:13.7px;font-weight:700;color:#1c1f2a;letter-spacing:-0.049px;">Status</span>
<span class="t" style="left:1010.20px;top:223.50px;font-size:13.7px;font-weight:700;color:#1c1f2a;letter-spacing:-0.217px;">Price / month</span>
<span class="t" style="left:1150.40px;top:223.50px;font-size:13.7px;font-weight:700;color:#1c1f2a;letter-spacing:-0.168px;">Next renewal</span>
<span class="t" style="left:508.00px;top:264.80px;font-size:12.4px;font-weight:700;color:#8b6fd0;width:24px;text-align:center;">A</span>
<span class="t" style="left:540.30px;top:265.00px;font-size:14.8px;font-weight:400;color:#26272d;letter-spacing:-0.245px;">Ralph Edwards</span>
<span class="t" style="left:730.30px;top:265.00px;font-size:14.8px;font-weight:400;color:#26272d;letter-spacing:-0.208px;">A558612</span>
<span class="t" style="left:877.30px;top:265.00px;font-size:12.7px;font-weight:700;color:#43862f;letter-spacing:-0.246px;">Accepted</span>
<span class="t" style="left:1010.20px;top:265.00px;font-size:14.8px;font-weight:400;color:#26272d;letter-spacing:-0.193px;">$10.00</span>
<span class="t" style="left:1150.40px;top:265.00px;font-size:14.8px;font-weight:400;color:#26272d;letter-spacing:-0.192px;">15 Dec 2025</span>
<span class="t" style="left:540.30px;top:307.00px;font-size:14.8px;font-weight:400;color:#26272d;letter-spacing:-0.029px;">Arlene McCoy</span>
<span class="t" style="left:730.30px;top:307.00px;font-size:14.8px;font-weight:400;color:#26272d;letter-spacing:-0.158px;">A651535</span>
<span class="t" style="left:877.30px;top:307.00px;font-size:12.7px;font-weight:700;color:#b83a3a;letter-spacing:-0.356px;">Rejected</span>
<span class="t" style="left:1010.20px;top:307.00px;font-size:14.8px;font-weight:400;color:#26272d;letter-spacing:-0.193px;">$10.00</span>
<span class="t" style="left:1150.60px;top:307.50px;font-size:12px;font-weight:400;color:#26272d;">–</span>
<span class="t" style="left:508.00px;top:348.80px;font-size:12.4px;font-weight:700;color:#6fbf5e;width:24px;text-align:center;">E</span>
<span class="t" style="left:540.30px;top:349.00px;font-size:14.8px;font-weight:400;color:#26272d;letter-spacing:-0.040px;">Esther Howard</span>
<span class="t" style="left:730.30px;top:349.00px;font-size:14.8px;font-weight:400;color:#26272d;letter-spacing:-0.158px;">A487441</span>
<span class="t" style="left:877.30px;top:349.00px;font-size:12.7px;font-weight:700;color:#b5650f;letter-spacing:-0.608px;">Pending</span>
<span class="t" style="left:1010.20px;top:349.00px;font-size:14.8px;font-weight:400;color:#26272d;letter-spacing:-0.193px;">$10.00</span>
<span class="t" style="left:1150.60px;top:349.50px;font-size:12px;font-weight:400;color:#26272d;">–</span>
<span class="t" style="left:508.00px;top:390.80px;font-size:12.4px;font-weight:700;color:#8b6fd0;width:24px;text-align:center;">A</span>
<span class="t" style="left:540.30px;top:391.00px;font-size:14.8px;font-weight:400;color:#26272d;letter-spacing:-0.295px;">Dianne Russell</span>
<span class="t" style="left:730.30px;top:391.00px;font-size:14.8px;font-weight:400;color:#26272d;letter-spacing:-0.092px;">A653518</span>
<span class="t" style="left:877.30px;top:391.00px;font-size:12.7px;font-weight:700;color:#b83a3a;letter-spacing:-0.356px;">Rejected</span>
<span class="t" style="left:1010.20px;top:391.00px;font-size:14.8px;font-weight:400;color:#26272d;letter-spacing:-0.193px;">$10.00</span>
<span class="t" style="left:1150.60px;top:391.50px;font-size:12px;font-weight:400;color:#26272d;">–</span>
<span class="t" style="left:540.30px;top:433.00px;font-size:14.8px;font-weight:400;color:#26272d;letter-spacing:-0.083px;">Floyd Miles</span>
<span class="t" style="left:730.30px;top:433.00px;font-size:14.8px;font-weight:400;color:#26272d;letter-spacing:0.075px;">A267400</span>
<span class="t" style="left:877.30px;top:433.00px;font-size:12.7px;font-weight:700;color:#b5650f;letter-spacing:-0.608px;">Pending</span>
<span class="t" style="left:1010.20px;top:433.00px;font-size:14.8px;font-weight:400;color:#26272d;letter-spacing:-0.193px;">$10.00</span>
<span class="t" style="left:1150.60px;top:433.50px;font-size:12px;font-weight:400;color:#26272d;">–</span>
<span class="t" style="left:508.00px;top:474.80px;font-size:12.4px;font-weight:700;color:#3aa5a5;width:24px;text-align:center;">K</span>
<span class="t" style="left:540.30px;top:475.00px;font-size:14.8px;font-weight:400;color:#26272d;letter-spacing:0.065px;">Kathryn Murphy</span>
<span class="t" style="left:730.30px;top:475.00px;font-size:14.8px;font-weight:400;color:#26272d;letter-spacing:0.075px;">A267400</span>
<span class="t" style="left:877.30px;top:475.00px;font-size:12.7px;font-weight:700;color:#43862f;letter-spacing:-0.246px;">Accepted</span>
<span class="t" style="left:1010.20px;top:475.00px;font-size:14.8px;font-weight:400;color:#26272d;letter-spacing:-0.193px;">$10.00</span>
<span class="t" style="left:1150.40px;top:475.00px;font-size:14.8px;font-weight:400;color:#26272d;letter-spacing:-0.192px;">15 Dec 2025</span>
<span class="t" style="left:508.00px;top:516.80px;font-size:12.4px;font-weight:700;color:#8b6fd0;width:24px;text-align:center;">A</span>
<span class="t" style="left:540.30px;top:517.00px;font-size:14.8px;font-weight:400;color:#26272d;letter-spacing:-0.162px;">Theresa Webb</span>
<span class="t" style="left:730.30px;top:517.00px;font-size:14.8px;font-weight:400;color:#26272d;letter-spacing:-0.158px;">A651535</span>
<span class="t" style="left:877.30px;top:517.00px;font-size:12.7px;font-weight:700;color:#43862f;letter-spacing:-0.246px;">Accepted</span>
<span class="t" style="left:1010.20px;top:517.00px;font-size:14.8px;font-weight:400;color:#26272d;letter-spacing:-0.193px;">$10.00</span>
<span class="t" style="left:1150.40px;top:517.00px;font-size:14.8px;font-weight:400;color:#26272d;letter-spacing:-0.192px;">15 Dec 2025</span>
<span class="t" style="left:508.00px;top:558.80px;font-size:12.4px;font-weight:700;color:#8b6fd0;width:24px;text-align:center;">A</span>
<span class="t" style="left:540.30px;top:559.00px;font-size:14.8px;font-weight:400;color:#26272d;letter-spacing:-0.077px;">Cody Fisher</span>
<span class="t" style="left:730.30px;top:559.00px;font-size:14.8px;font-weight:400;color:#26272d;letter-spacing:0.508px;">A449003</span>
<span class="t" style="left:877.30px;top:559.00px;font-size:12.7px;font-weight:700;color:#b83a3a;letter-spacing:-0.356px;">Rejected</span>
<span class="t" style="left:1010.20px;top:559.00px;font-size:14.8px;font-weight:400;color:#26272d;letter-spacing:-0.193px;">$10.00</span>
<span class="t" style="left:1150.60px;top:559.50px;font-size:12px;font-weight:400;color:#26272d;">–</span>
<span class="t" style="left:540.30px;top:601.00px;font-size:14.8px;font-weight:400;color:#26272d;letter-spacing:-0.165px;">Cameron Williamson</span>
<span class="t" style="left:730.30px;top:601.00px;font-size:14.8px;font-weight:400;color:#26272d;letter-spacing:-0.092px;">A653518</span>
<span class="t" style="left:877.30px;top:601.00px;font-size:12.7px;font-weight:700;color:#43862f;letter-spacing:-0.246px;">Accepted</span>
<span class="t" style="left:1010.20px;top:601.00px;font-size:14.8px;font-weight:400;color:#26272d;letter-spacing:-0.193px;">$10.00</span>
<span class="t" style="left:1150.40px;top:601.00px;font-size:14.8px;font-weight:400;color:#26272d;letter-spacing:-0.192px;">15 Dec 2025</span>
<span class="t" style="left:508.00px;top:642.80px;font-size:12.4px;font-weight:700;color:#2b8ae8;width:24px;text-align:center;">J</span>
<span class="t" style="left:540.30px;top:643.00px;font-size:14.8px;font-weight:400;color:#26272d;letter-spacing:0.061px;">Jacob Jones</span>
<span class="t" style="left:730.30px;top:643.00px;font-size:14.8px;font-weight:400;color:#26272d;letter-spacing:0.075px;">A267400</span>
<span class="t" style="left:877.30px;top:643.00px;font-size:12.7px;font-weight:700;color:#43862f;letter-spacing:-0.246px;">Accepted</span>
<span class="t" style="left:1010.20px;top:643.00px;font-size:14.8px;font-weight:400;color:#26272d;letter-spacing:-0.193px;">$10.00</span>
<span class="t" style="left:1150.40px;top:643.00px;font-size:14.8px;font-weight:400;color:#26272d;letter-spacing:-0.192px;">15 Dec 2025</span>
<span class="t" style="left:572.30px;top:692.60px;font-size:13.6px;font-weight:700;color:#2b2e42;letter-spacing:-0.540px;">1-10</span>
<span class="t" style="left:604.50px;top:692.60px;font-size:13.6px;font-weight:400;color:#3a3d55;letter-spacing:-0.444px;">of</span>
<span class="t" style="left:621.60px;top:692.60px;font-size:13.6px;font-weight:700;color:#2b2e42;letter-spacing:-2.025px;">13</span>
<span class="t" style="left:641.00px;top:692.60px;font-size:13.6px;font-weight:400;color:#3a3d55;letter-spacing:-1.045px;">IDs</span>
<span class="t" style="left:1223.70px;top:693.00px;font-size:13.8px;font-weight:400;color:#3a3d55;letter-spacing:-0.120px;">Show on page</span>
<span class="t" style="left:1333.00px;top:692.10px;font-size:13px;font-weight:400;color:#2b2e42;letter-spacing:-0.139px;">10 rows</span>
</body></html>
